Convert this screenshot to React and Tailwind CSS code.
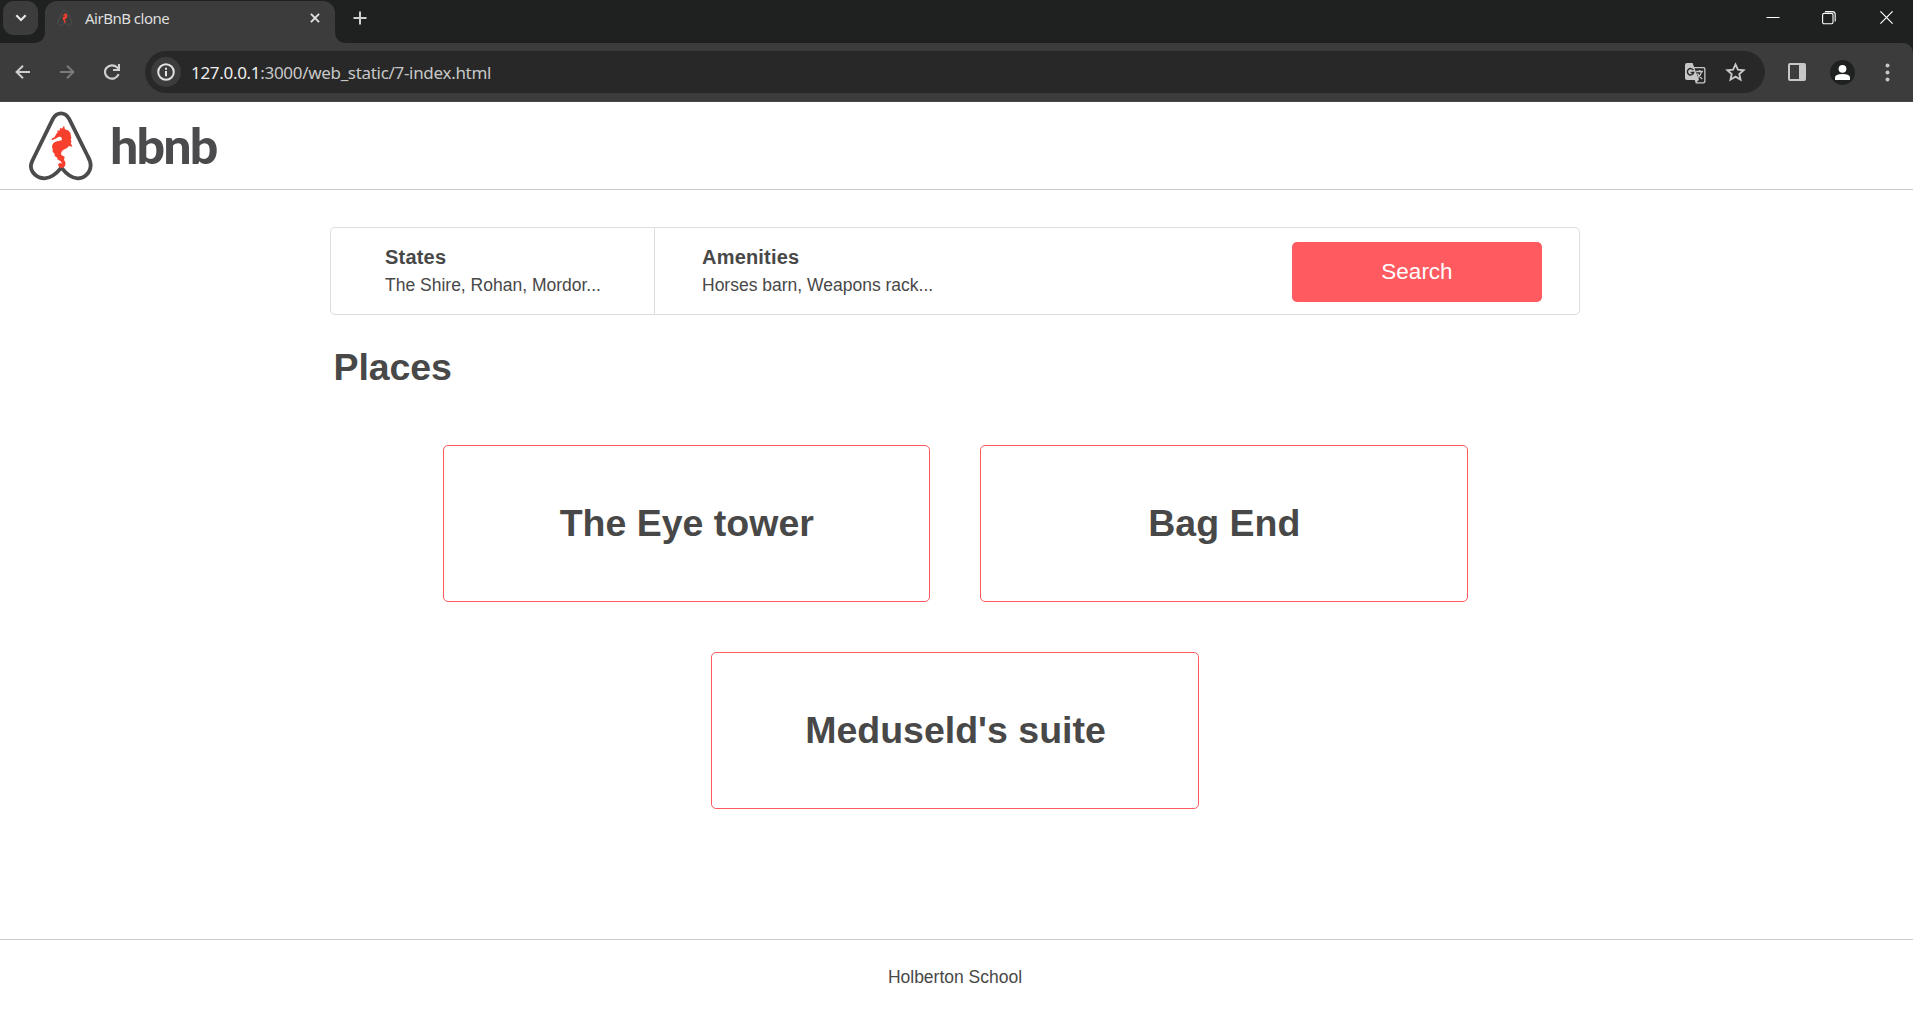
import React from "react";

const Seahorse = () => (
  <path
    fill="#f63f2c"
    d="M132 62 L135 73 Q147 75 151 83 L154 99 L152 105 L155 110 L152 113 L157 125 L147 123 Q142 131 131 134 Q121 140 124 150 L134 155 L132 165 Q139 173 135 183 Q130 191 121 188 Q113 184 115 177 Q120 171 126 176 Q124 169 117 166 L112 163 L112 158 L104 153 L104 147 L98 140 L98 132 L96 126 Q96 113 112 109 L125 106 Q128 101 123 96 Q116 94 111 99 L96 106 L94 102 L104 96 Q107 88 113 82 L112 76 L119 77 L120 68 L126 71 Z"
  />
);

const LogoMark = ({ className, outline = "#4b4b4d" }) => (
  <svg className={className} viewBox="0 0 252 252" fill="none">
    <path
      d="M124 188 C108 208 91 219 74 220 C48 220 30 198 33 179 C35 170 40 161 44 153 L99 41 Q108 25 123 25 Q138 25 147 41 L203 153 C208 162 212 172 212 181 C211 203 194 220 172 220 C155 219 139 207 124 188 Z"
      stroke={outline}
      strokeWidth="11.5"
      strokeLinejoin="round"
    />
    <Seahorse />
  </svg>
);

const TabStrip = () => (
  <div className="flex h-[43px] items-start bg-[#1f2120]">
    <div className="ml-[3px] mt-px flex h-[34px] w-[35px] items-center justify-center rounded-[11px] bg-[#3c3c3c]">
      <svg width="12" height="8" viewBox="0 0 12 8" fill="none" stroke="#e6e6e6" strokeWidth="2.2">
        <path d="M1.3 1.3 6 6 10.7 1.3" />
      </svg>
    </div>
    <svg className="ml-[-5px] mt-[31px]" width="12" height="12" viewBox="0 0 12 12">
      <path d="M12 0 V12 H0 Q12 12 12 0Z" fill="#3c3c3c" />
    </svg>
    <div className="mt-px flex h-[42px] w-[290px] items-start rounded-t-[12px] bg-[#3c3c3c]">
      <LogoMark className="ml-[10px] mt-[7px] h-[20px] w-[20px]" outline="#505052" />
      <span className="ml-[10px] mt-[6px] w-[225px] font-['Noto_Sans',sans-serif] text-[15px] leading-[22px] tracking-[-0.5px] text-[#dfdfdf]">
        AirBnB clone
      </span>
      <svg className="mt-[12px]" width="10" height="10" viewBox="0 0 11 11" stroke="#e3e3e3" strokeWidth="2">
        <path d="M1 1 10 10M10 1 1 10" />
      </svg>
    </div>
    <svg className="mt-[31px]" width="12" height="12" viewBox="0 0 12 12">
      <path d="M0 0 V12 H12 Q0 12 0 0Z" fill="#3c3c3c" />
    </svg>
    <svg className="ml-[6px] mt-[11px]" width="14" height="14" viewBox="0 0 14 14" stroke="#cfcfcf" strokeWidth="2">
      <path d="M7 .5V13.5M.5 7H13.5" />
    </svg>
    <div className="ml-auto flex items-start">
      <svg className="mt-[10px]" width="14" height="14" viewBox="0 0 14 14" stroke="#fff">
        <path d="M.5 7.5H13.5" />
      </svg>
      <svg className="ml-[42px] mt-[11px]" width="14" height="14" viewBox="0 0 14 14" fill="none" stroke="#fff" strokeWidth="1.1">
        <rect x=".6" y="2.4" width="10.4" height="10.4" rx="1.5" />
        <path d="M3 .6H10.2Q13.2 .6 13.2 3.4V10.4" />
      </svg>
      <svg className="ml-[44px] mr-[20px] mt-[11px]" width="13" height="13" viewBox="0 0 13 13" stroke="#fff" strokeWidth="1.2">
        <path d="M.4 .4 12.6 12.6M12.6 .4 .4 12.6" />
      </svg>
    </div>
  </div>
);

const TranslateIcon = () => (
  <svg className="mt-[2px]" width="21" height="21" viewBox="0 0 21 21">
    <path d="M2 0H7.6L9 4H18.5Q20.5 4 20.5 6V18.5Q20.5 20.5 18.5 20.5H10.8L9.7 17H2Q0 17 0 15V2Q0 0 2 0Z" fill="#c7c7c7" />
    <path d="M9.5 5.3H18.2Q19.2 5.3 19.2 6.3V18.2Q19.2 19.2 18.2 19.2H11.7L14 16.8Z" fill="#282828" />
    <path d="M8.4 7.2A3.2 3.2 0 1 0 8.7 9.5H5.7" fill="none" stroke="#282828" strokeWidth="1.4" />
    <path d="M11.2 8.5H18M14.6 7V8.5M16.7 8.7Q15.5 13 12.4 14.8M12.4 10.5Q14 13.5 17.3 16" fill="none" stroke="#c7c7c7" strokeWidth="1.3" />
  </svg>
);

const Toolbar = () => (
  <div className="flex h-[59px] items-center rounded-tr-[10px] border-b border-[#474747] bg-[#3c3c3c]">
    <svg className="ml-[15px]" width="15" height="14" viewBox="0 0 15 14" fill="none" stroke="#cfcfcf" strokeWidth="2">
      <path d="M15 7H1.6M8 .8 1.6 7 8 13.2" />
    </svg>
    <svg className="ml-[30px]" width="15" height="14" viewBox="0 0 15 14" fill="none" stroke="#7b7b7b" strokeWidth="2">
      <path d="M0 7H13.4M7 .8 13.4 7 7 13.2" />
    </svg>
    <svg className="ml-[29px]" width="17" height="16" viewBox="0 0 17 16">
      <path d="M14.6 10.2A7 6.7 0 1 1 13 3.3L15 5.2" fill="none" stroke="#cfcfcf" strokeWidth="2.2" />
      <path d="M16 0V7H9V5H14V0Z" fill="#cfcfcf" />
    </svg>
    <div className="ml-[24px] flex h-[42px] w-[1620px] items-center rounded-full bg-[#282828]">
      <div className="ml-[6px] flex h-[30px] w-[30px] items-center justify-center rounded-full bg-[#3c3c3c]">
        <svg width="18" height="18" viewBox="0 0 18 18" fill="none" stroke="#e3e3e3" strokeWidth="2">
          <circle cx="9" cy="9" r="7.8" />
          <path d="M9 8V13.2M9 4.8V6.7" />
        </svg>
      </div>
      <span className="ml-[10px] mt-px whitespace-nowrap font-['Noto_Sans',sans-serif] text-[17px] leading-[24px] tracking-[-0.31px] text-[#c7c7c7]">
        <span className="text-[#ececec]">127.0.0.1</span>:3000/web_static/7-index.html
      </span>
      <div className="ml-auto mr-[19px] flex items-center gap-[19px]">
        <TranslateIcon />
        <svg width="21" height="20" viewBox="0 0 21 20" fill="none" stroke="#c7c7c7" strokeWidth="1.9">
          <path d="M10.5 2.4 12.9 7.6 18.6 8.2 14.3 12 15.5 17.6 10.5 14.7 5.5 17.6 6.7 12 2.4 8.2 8.1 7.6Z" />
        </svg>
      </div>
    </div>
    <svg className="ml-[23px]" width="18" height="18" viewBox="0 0 18 18">
      <rect x="1" y="1" width="16" height="16" rx="1" fill="none" stroke="#c7c7c7" strokeWidth="2" />
      <path d="M11 1H17V17H11Z" fill="#c7c7c7" />
    </svg>
    <svg className="ml-[24px]" width="25" height="25" viewBox="0 0 25 25">
      <circle cx="12.5" cy="12.5" r="12.5" fill="#1f2120" />
      <circle cx="12.5" cy="8.8" r="3.9" fill="#fff" />
      <path d="M5 20V17.5Q5 14 12.5 14T20 17.5V20Z" fill="#fff" />
    </svg>
    <svg className="ml-[30px]" width="5" height="19" viewBox="0 0 5 19" fill="#c7c7c7">
      <circle cx="2.5" cy="2.5" r="2" />
      <circle cx="2.5" cy="9.5" r="2" />
      <circle cx="2.5" cy="16.5" r="2" />
    </svg>
  </div>
);

const Place = ({ name }) => (
  <article className="flex h-[157px] w-[487.5px] items-center justify-center rounded-[5px] border border-[#ff5a5f] pb-[2px] pl-px">
    <h2 className="whitespace-nowrap text-[37.5px] font-bold leading-[42px]">{name}</h2>
  </article>
);

const Filter = ({ title, detail }) => (
  <div className="pt-[17px]">
    <h3 className="text-[20px] font-bold leading-[24px] tracking-[0.2px]">{title}</h3>
    <h4 className="mt-[5px] text-[17.5px] leading-[22px]">{detail}</h4>
  </div>
);

export default function App() {
  return (
    <div className="flex h-[1009px] w-[1913px] flex-col overflow-hidden bg-white font-['Liberation_Sans',Arial,sans-serif] text-[#484848]">
      <div className="bg-[#1f2120]">
        <TabStrip />
        <Toolbar />
      </div>
      <header className="flex h-[88px] border-b border-[#cccccc]">
        <LogoMark className="ml-[20px] mt-[3px] h-[84px] w-[84px]" />
        <span className="ml-[6px] mt-[13px] font-['Lato',sans-serif] text-[50px] font-black leading-[60px] tracking-[-1.8px] text-[#4b4b4d]">
          hbnb
        </span>
      </header>
      <main className="flex w-[1910px] flex-1 flex-col items-center">
        <div className="mt-[37px] w-[1250px]">
          <section className="flex h-[88px] rounded-[5px] border border-[#dddddd]">
            <div className="w-[324px] border-r border-[#dddddd] pl-[54px]">
              <Filter title="States" detail="The Shire, Rohan, Mordor..." />
            </div>
            <div className="pl-[47px]">
              <Filter title="Amenities" detail="Horses barn, Weapons rack..." />
            </div>
            <button className="ml-auto mr-[37px] mt-[14px] h-[60px] w-[250px] rounded-[5px] bg-[#ff5a5f] pb-px text-[22.5px] text-white">
              Search
            </button>
          </section>
          <h1 className="ml-[3.5px] mt-[31px] text-[37.5px] font-bold leading-[42px] tracking-[-0.1px]">Places</h1>
          <section className="mt-[57px] flex flex-wrap justify-center gap-[50px]">
            <Place name="The Eye tower" />
            <Place name="Bag End" />
            <Place name="Meduseld's suite" />
          </section>
        </div>
      </main>
      <footer className="flex h-[70px] items-center border-t border-[#cccccc]">
        <p className="w-[1910px] pt-[4px] text-center text-[17.5px] leading-[22px]">Holberton School</p>
      </footer>
    </div>
  );
}
